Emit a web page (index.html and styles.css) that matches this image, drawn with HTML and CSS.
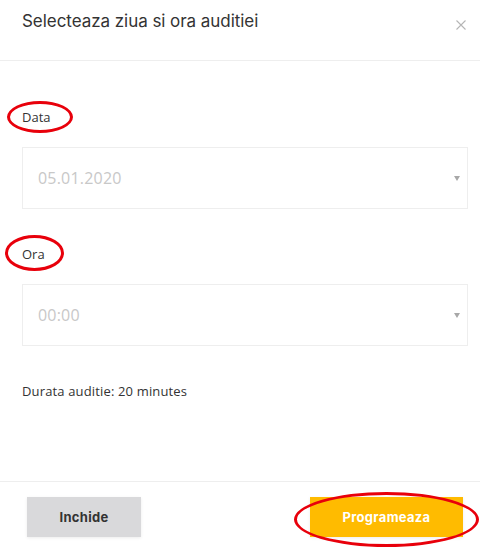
FILE: index.html
```html
<!DOCTYPE html>
<html lang="ro">
<head>
    <meta charset="UTF-8">
    <meta name="viewport" content="width=device-width, initial-scale=1.0">
    <title>Programare auditie</title>
    <link rel="stylesheet" href="styles.css">
</head>
<body>
    <div class="modal">
        <div class="modal-header">
            <h2 class="modal-title">Selecteaza ziua si ora auditiei</h2>
            <button class="close-btn" aria-label="Inchide">
                <svg width="10" height="10" viewBox="0 0 10 10">
                    <path d="M0.5 0.5 L9.5 9.5 M9.5 0.5 L0.5 9.5" stroke="#b5b5b5" stroke-width="1.1" fill="none"/>
                </svg>
            </button>
        </div>

        <div class="modal-body">
            <div class="field-label">Data</div>
            <div class="select-box">
                <span class="select-value">05.01.2020</span>
                <span class="select-arrow"></span>
            </div>

            <div class="field-label spaced">Ora</div>
            <div class="select-box">
                <span class="select-value">00:00</span>
                <span class="select-arrow"></span>
            </div>

            <p class="duration">Durata auditie: 20 minutes</p>
        </div>

        <div class="modal-footer">
            <button class="btn btn-close">Inchide</button>
            <button class="btn btn-primary">Programeaza</button>
        </div>

        <!-- marcaje rosii -->
        <span class="mark mark-data"></span>
        <span class="mark mark-ora"></span>
        <span class="mark mark-btn"></span>
    </div>
</body>
</html>
```

FILE: styles.css
```css
body {
    margin: 0;
    background-color: #fff;
    font-family: "Open Sans", Arial, sans-serif;
    color: #333;
}

.modal {
    position: relative;
    width: 480px;
    height: 550px;
    background-color: #fff;
}

.modal-header {
    height: 60px;
    padding: 0 14px 0 22px;
    border-bottom: 1px solid #eeeeee;
    display: flex;
    justify-content: space-between;
    align-items: flex-start;
}

.modal-title {
    margin: 11px 0 0;
    font-family: "Inter", "Open Sans", sans-serif;
    font-size: 17px;
    font-weight: 400;
    color: #333;
    letter-spacing: -0.05px;
}

.close-btn {
    margin-top: 20px;
    padding: 0;
    border: none;
    background: none;
    width: 10px;
    height: 10px;
    cursor: pointer;
    display: flex;
}

.modal-body {
    padding: 46px 12px 0 22px;
    height: 374px;
}

.field-label {
    font-family: "Open Sans", sans-serif;
    font-size: 13px;
    line-height: 20px;
    color: #333;
    margin-bottom: 20px;
}

.field-label.spaced {
    margin-top: 35px;
}

.select-box {
    height: 60px;
    border: 1px solid #eeeeee;
    display: flex;
    align-items: center;
    justify-content: space-between;
    padding: 0 7px 0 15px;
}

.select-value {
    font-family: "Open Sans", sans-serif;
    font-size: 16px;
    letter-spacing: 0.2px;
    color: #c8c8c8;
}

.select-arrow {
    width: 0;
    height: 0;
    border-left: 3px solid transparent;
    border-right: 3px solid transparent;
    border-top: 5px solid #a8a8a8;
}

.duration {
    margin: 35px 0 0;
    font-family: "Open Sans", sans-serif;
    font-size: 13px;
    letter-spacing: 0.15px;
    line-height: 20px;
    color: #333;
}

.modal-footer {
    border-top: 1px solid #eeeeee;
    padding: 15px 17px 0 27px;
    display: flex;
    justify-content: space-between;
}

.btn {
    height: 40px;
    border: none;
    font-family: "Inter", "Open Sans", sans-serif;
    font-size: 13px;
    font-weight: 700;
    letter-spacing: 0.3px;
    cursor: pointer;
    box-shadow: 0 1px 3px rgba(0, 0, 0, 0.08);
}

.btn-close {
    width: 114px;
    background-color: #d9d9db;
    color: #333;
}

.btn-primary {
    width: 153px;
    background-color: #ffbb00;
    color: #fff;
}

.mark {
    position: absolute;
    border: 3px solid #e8000b;
    border-radius: 50%;
    box-sizing: border-box;
    pointer-events: none;
}

.mark-data {
    left: 7px;
    top: 101px;
    width: 66px;
    height: 32px;
}

.mark-ora {
    left: 5px;
    top: 235px;
    width: 59px;
    height: 36px;
}

.mark-btn {
    left: 294px;
    top: 492px;
    width: 185px;
    height: 55px;
}
```
